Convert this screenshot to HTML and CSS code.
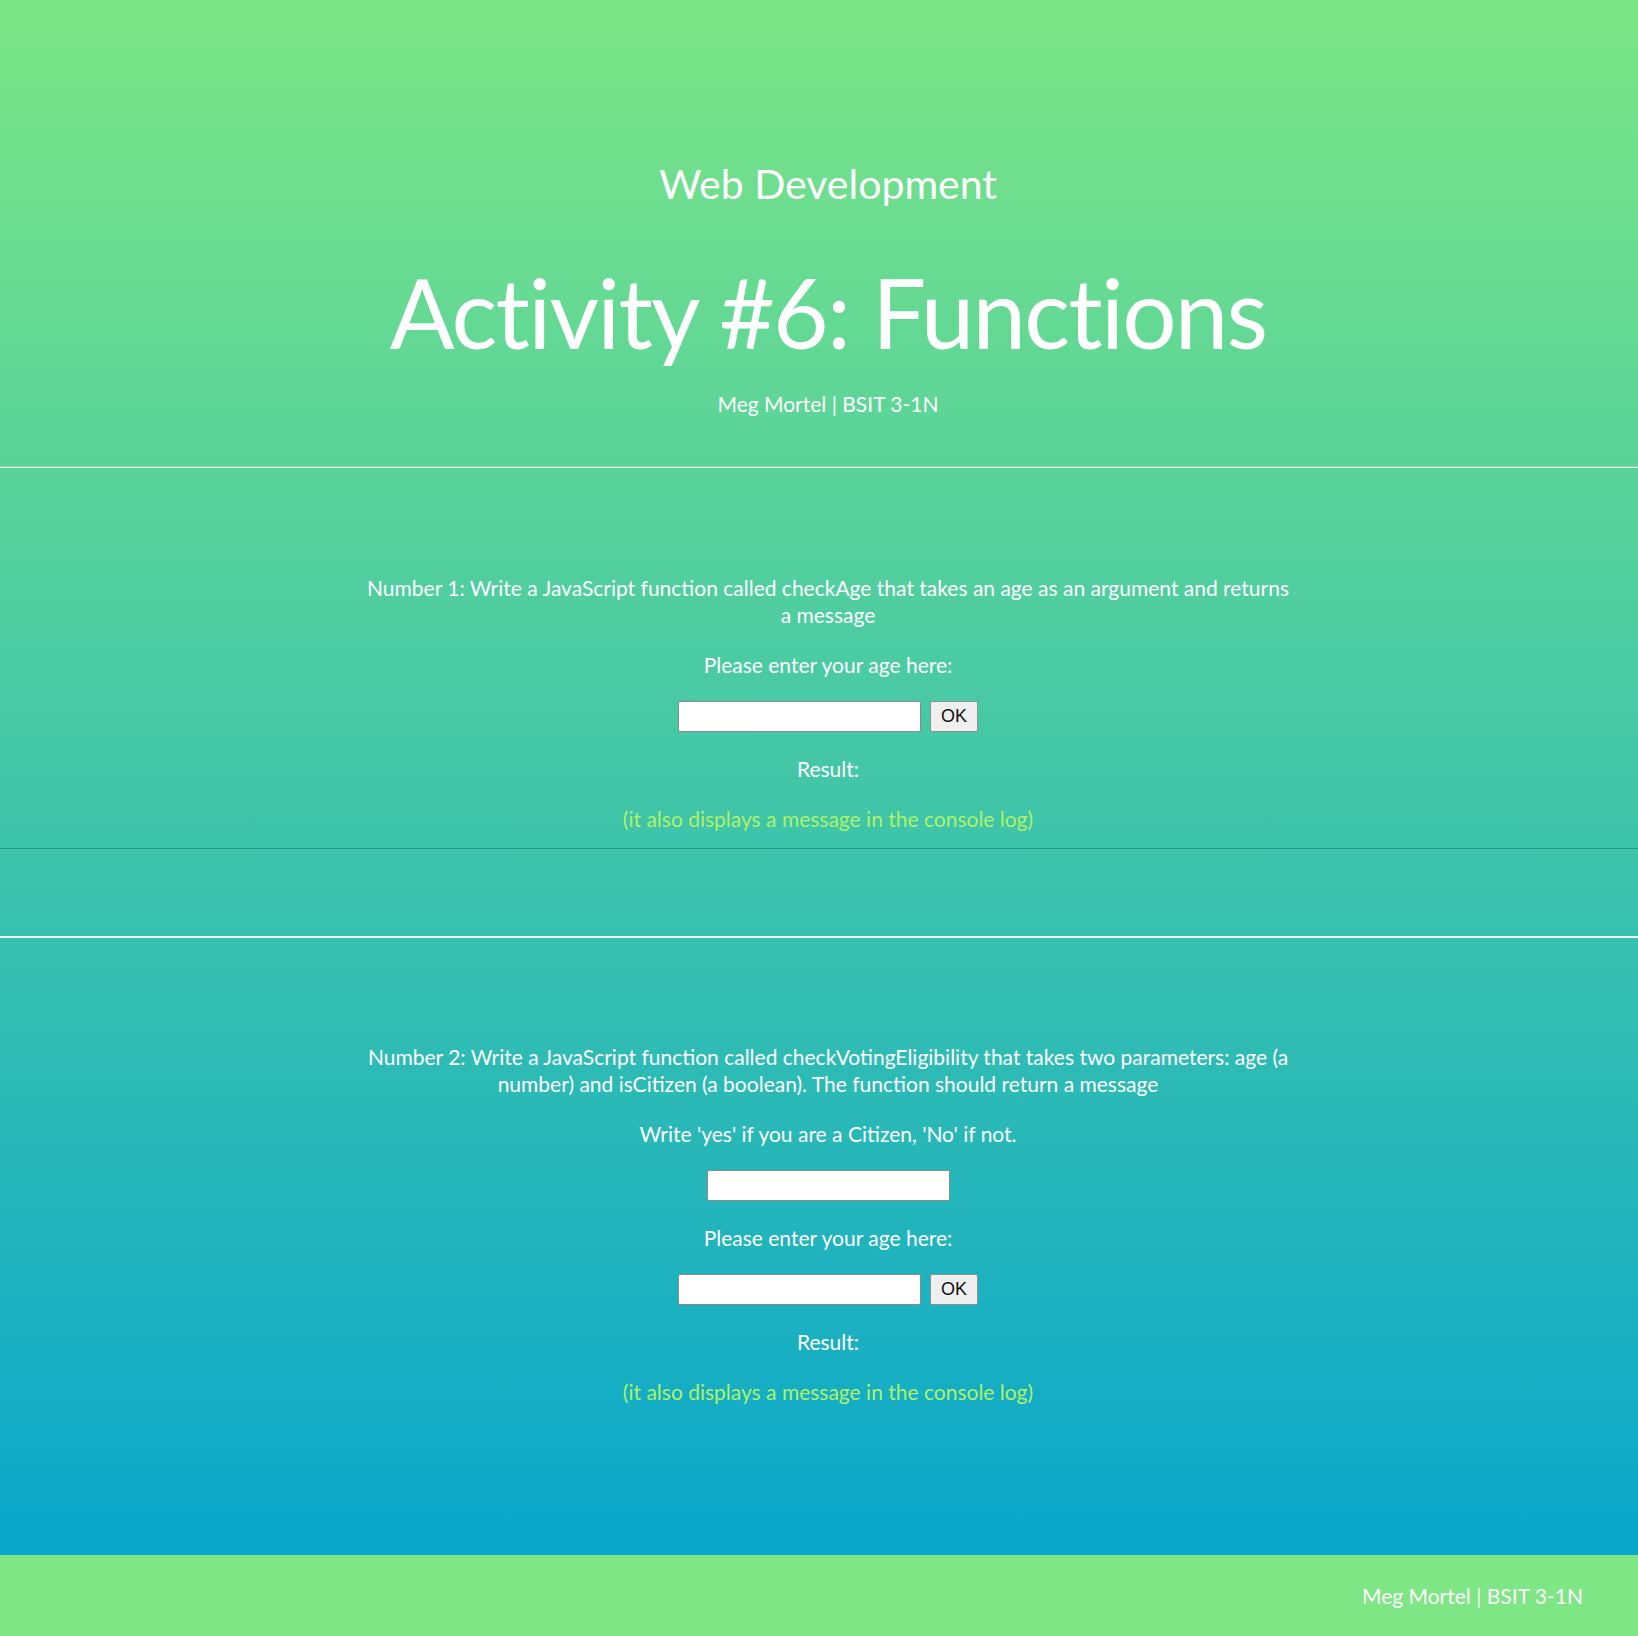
FILE: index.html
```html
<!DOCTYPE html>
<html lang="en">
<head>
<meta charset="utf-8">
<title>Activity #6: Functions</title>
<link rel="stylesheet" href="styles.css">
</head>
<body>
<div class="page">
  <header class="hero">
    <h3 class="course">Web Development</h3>
    <h1 class="title">Activity #6: Functions</h1>
    <p class="byline">Meg Mortel | BSIT 3-1N</p>
  </header>
  <hr class="rule rule-light">
  <section class="task task-one">
    <p class="prompt">Number 1: Write a JavaScript function called checkAge that takes an age as an argument and returns a message</p>
    <p class="label">Please enter your age here:</p>
    <div class="controls"><input class="field" type="text"><button class="ok" type="button">OK</button></div>
    <p class="label">Result:</p>
    <p class="note">(it also displays a message in the console log)</p>
  </section>
  <hr class="rule rule-dark">
  <div class="spacer"></div>
  <hr class="rule rule-white">
  <section class="task task-two">
    <p class="prompt">Number 2: Write a JavaScript function called checkVotingEligibility that takes two parameters: age (a number) and isCitizen (a boolean). The function should return a message</p>
    <p class="label">Write 'yes' if you are a Citizen, 'No' if not.</p>
    <div class="controls"><input class="field" type="text"></div>
    <p class="label">Please enter your age here:</p>
    <div class="controls"><input class="field" type="text"><button class="ok" type="button">OK</button></div>
    <p class="label">Result:</p>
    <p class="note">(it also displays a message in the console log)</p>
  </section>
</div>
<footer class="footer">Meg Mortel | BSIT 3-1N</footer>
</body>
</html>
```
FILE: styles.css
```css
* { box-sizing: border-box; }
html, body { margin: 0; padding: 0; }
body {
  font-family: "Lato", "Open Sans", sans-serif;
  color: #ffffff;
  background: #7ee684;
}
.page {
  background: linear-gradient(180deg, #7ce686 0%, #3ec4aa 54%, #0aa7cc 100%);
  height: 1555px;
  overflow: hidden;
}
.hero, .task {
  padding-left: 18px;
  text-align: center;
}
.hero { padding-top: 159px; }
.course {
  margin: 0;
  font-weight: 400;
  font-size: 41px;
  line-height: 50px;
}
.title {
  margin: 47px 0 0;
  font-weight: 400;
  font-size: 96px;
  line-height: 112px;
  letter-spacing: -1.8px;
}
.byline {
  margin: 22px 0 0;
  font-size: 21px;
  line-height: 27px;
}
.rule { margin: 0; border: 0; }
.rule-light {
  margin-top: 49px;
  height: 2px;
  border-top: 1px solid rgba(170, 200, 190, 0.9);
  border-bottom: 1px solid rgba(255, 255, 255, 0.7);
}
.rule-dark {
  height: 1px;
  background: rgba(20, 120, 110, 0.55);
}
.rule-white {
  height: 2px;
  background: rgba(255, 255, 255, 0.9);
}
.spacer { height: 87px; }
.task {
  display: flex;
  flex-direction: column;
  align-items: center;
  gap: 23px;
}
.task-one { padding-top: 106px; padding-bottom: 16px; }
.task-two { padding-top: 105px; }
.task p { margin: 0; font-size: 21px; line-height: 27px; }
.prompt { width: 930px; }
.note { color: #adf26a; }
.controls { display: flex; gap: 9px; height: 31px; }
.field {
  width: 243px;
  height: 31px;
  border: 1px solid #8a8a8a;
  border-radius: 2px;
  background: #fff;
}
.ok {
  width: 48px;
  height: 31px;
  padding: 0;
  font-family: "Liberation Sans", Arial, sans-serif;
  font-size: 18px;
  color: #111;
  background: #efefef;
  border: 1px solid #8f8f8f;
  border-radius: 2px;
}
.footer {
  height: 81px;
  background: #7ee684;
  display: flex;
  align-items: center;
  justify-content: flex-end;
  padding-right: 55px;
  font-size: 21px;
}
```
